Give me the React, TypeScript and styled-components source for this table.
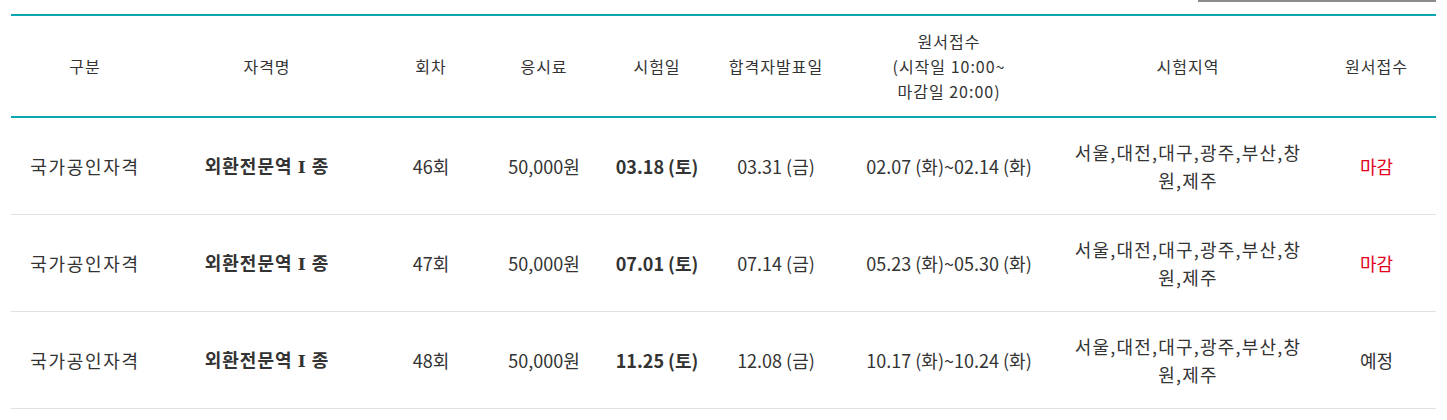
import React from 'react'
import styled, { createGlobalStyle } from 'styled-components'

const GlobalStyle = createGlobalStyle`
  body {
    margin: 0;
    background: #fff;
    font-family: 'Noto Sans CJK KR', 'Noto Sans', sans-serif;
    color: #333;
  }
`

const Wrap = styled.div`
  padding: 0 11px;
`

const TopBar = styled.div`
  display: flex;
  justify-content: flex-end;
  margin-bottom: 12px;
`

const SearchEdge = styled.div`
  width: 238px;
  height: 0;
  border-bottom: 2px solid #8c8c8c;
`

const Table = styled.table`
  width: 1425px;
  border-collapse: collapse;
  table-layout: fixed;
  border-top: 2px solid #0aa6b1;
`

const HeadCell = styled.th`
  height: 100px;
  padding: 0;
  font-size: 16px;
  font-weight: 400;
  line-height: 25px;
  letter-spacing: 1px;
  color: #333;
  text-align: center;
  vertical-align: middle;
  border-bottom: 2px solid #0aa6b1;
`

const Row = styled.tr`
  border-bottom: 1px solid #e2e2e2;
`

const Cell = styled.td<{ $bold?: boolean; $tone?: 'closed' | 'plain'; $spacing?: number }>`
  height: 96px;
  padding: 0 4px;
  font-size: 18px;
  line-height: 28px;
  text-align: center;
  vertical-align: middle;
  letter-spacing: ${({ $spacing }) => $spacing ?? 0}px;
  font-weight: ${({ $bold }) => ($bold ? 700 : 400)};
  color: ${({ $tone }) => ($tone === 'closed' ? '#e3001b' : '#333')};
`

const Numeral = styled.span`
  font-family: 'DejaVu Serif', 'Liberation Serif', serif;
  font-size: 17px;
  font-weight: 700;
`

const RegionText = styled.div`
  width: 236px;
  margin: 0 auto;
  word-break: break-all;
`

const widths = [148, 216, 112, 114, 112, 126, 220, 258, 119]

const rows = [
  { round: '46회', exam: '03.18 (토)', result: '03.31 (금)', apply: '02.07 (화)~02.14 (화)', status: '마감' },
  { round: '47회', exam: '07.01 (토)', result: '07.14 (금)', apply: '05.23 (화)~05.30 (화)', status: '마감' },
  { round: '48회', exam: '11.25 (토)', result: '12.08 (금)', apply: '10.17 (화)~10.24 (화)', status: '예정' },
]

export default function App() {
  return (
    <>
      <GlobalStyle />
      <Wrap>
        <TopBar>
          <SearchEdge />
        </TopBar>
        <Table>
          <colgroup>
            {widths.map((w, i) => (
              <col key={i} style={{ width: w }} />
            ))}
          </colgroup>
          <thead>
            <tr>
              <HeadCell>구분</HeadCell>
              <HeadCell>자격명</HeadCell>
              <HeadCell>회차</HeadCell>
              <HeadCell>응시료</HeadCell>
              <HeadCell>시험일</HeadCell>
              <HeadCell>합격자발표일</HeadCell>
              <HeadCell>
                원서접수
                <br />
                (시작일 10:00~
                <br />
                마감일 20:00)
              </HeadCell>
              <HeadCell>시험지역</HeadCell>
              <HeadCell>원서접수</HeadCell>
            </tr>
          </thead>
          <tbody>
            {rows.map((r) => (
              <Row key={r.round}>
                <Cell $spacing={1.7}>국가공인자격</Cell>
                <Cell $bold $spacing={1}>
                  외환전문역 <Numeral>Ⅰ</Numeral> 종
                </Cell>
                <Cell>{r.round}</Cell>
                <Cell>50,000원</Cell>
                <Cell $bold>{r.exam}</Cell>
                <Cell>{r.result}</Cell>
                <Cell>{r.apply}</Cell>
                <Cell $spacing={1.2}>
                  <RegionText>서울,대전,대구,광주,부산,창원,제주</RegionText>
                </Cell>
                <Cell $tone={r.status === '마감' ? 'closed' : 'plain'}>{r.status}</Cell>
              </Row>
            ))}
          </tbody>
        </Table>
      </Wrap>
    </>
  )
}
